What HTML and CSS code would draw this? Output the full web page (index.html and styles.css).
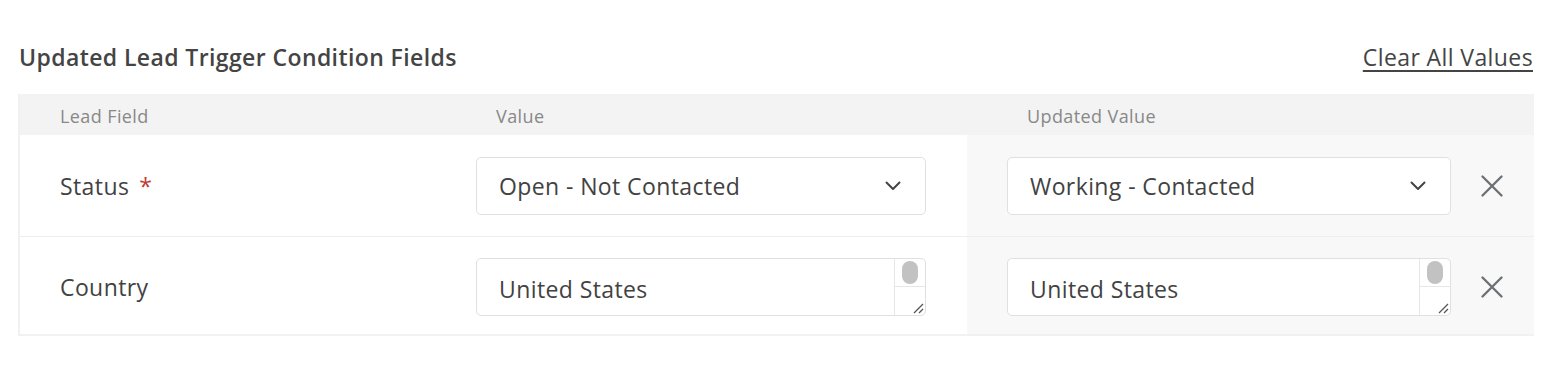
FILE: index.html
```html
<!DOCTYPE html>
<html>
<head>
  <title>Updated Lead Trigger Condition Fields</title>
  <link rel="stylesheet" href="styles.css">
</head>
<body>

  <div class="panel">
    <div class="panel-head">
      <h2 class="title">Updated Lead Trigger Condition Fields</h2>
      <a class="clear" href="#">Clear All Values</a>
    </div>

    <div class="table">
      <div class="row head">
        <div class="cell label">Lead Field</div>
        <div class="cell value">Value</div>
        <div class="cell updated">Updated Value</div>
      </div>

      <div class="row">
        <div class="cell label">Status <span class="req">*</span></div>
        <div class="cell value">
          <div class="select">
            <span>Open - Not Contacted</span>
            <svg class="chevron" width="16" height="10" viewBox="0 0 16 10"><path d="M1.5 1.5 L8 8 L14.5 1.5" fill="none" stroke="#444" stroke-width="2" stroke-linecap="round" stroke-linejoin="round"/></svg>
          </div>
        </div>
        <div class="cell updated">
          <div class="select">
            <span>Working - Contacted</span>
            <svg class="chevron" width="16" height="10" viewBox="0 0 16 10"><path d="M1.5 1.5 L8 8 L14.5 1.5" fill="none" stroke="#444" stroke-width="2" stroke-linecap="round" stroke-linejoin="round"/></svg>
          </div>
          <div class="remove">
            <svg width="22" height="22" viewBox="0 0 22 22"><path d="M1.5 1.5 L20.5 20.5 M20.5 1.5 L1.5 20.5" stroke="#6b7074" stroke-width="2.3" stroke-linecap="round"/></svg>
          </div>
        </div>
      </div>

      <div class="row last">
        <div class="cell label">Country</div>
        <div class="cell value">
          <div class="textarea">
            <span class="text">United States</span>
            <div class="scroll">
              <div class="track"><div class="thumb"></div></div>
              <div class="grip">
                <svg width="12" height="12" viewBox="0 0 12 12"><path d="M2 11 L11 2 M7 11 L11 7" stroke="#555" stroke-width="1.3"/></svg>
              </div>
            </div>
          </div>
        </div>
        <div class="cell updated">
          <div class="textarea">
            <span class="text">United States</span>
            <div class="scroll">
              <div class="track"><div class="thumb"></div></div>
              <div class="grip">
                <svg width="12" height="12" viewBox="0 0 12 12"><path d="M2 11 L11 2 M7 11 L11 7" stroke="#555" stroke-width="1.3"/></svg>
              </div>
            </div>
          </div>
          <div class="remove">
            <svg width="22" height="22" viewBox="0 0 22 22"><path d="M1.5 1.5 L20.5 20.5 M20.5 1.5 L1.5 20.5" stroke="#6b7074" stroke-width="2.3" stroke-linecap="round"/></svg>
          </div>
        </div>
      </div>
    </div>
  </div>

</body>
</html>
```

FILE: styles.css
```css
body {
  margin: 0;
  background: #fff;
  font-family: "Open Sans", "Noto Sans", sans-serif;
  color: #424242;
  letter-spacing: 0.4px;
}

.panel {
  width: 1516px;
  padding: 38px 0 0 18px;
}

.panel-head {
  display: flex;
  justify-content: space-between;
  align-items: center;
  height: 38px;
  margin-bottom: 18px;
}

.title {
  margin: 0 0 0 1px;
  font-size: 23px;
  font-weight: 600;
  color: #444;
}

.clear {
  font-size: 23px;
  color: #444;
  text-decoration: underline;
  text-underline-offset: 4px;
  margin-right: 1px;
}

.table {
  border: 2px solid #f1f1f1;
  border-top: 0;
  border-right: 0;
}

.row {
  display: grid;
  grid-template-columns: 456px 491px 1fr;
  border-bottom: 1px solid #eeeeee;
}

.row.head {
  background: #f3f3f3;
  height: 41px;
  border-bottom: 0;
}

.row.last {
  border-bottom: 0;
}

.cell {
  display: flex;
  align-items: center;
  font-size: 23px;
  padding: 22px 0 21px;
}

.head .cell {
  font-size: 18px;
  color: #888;
  padding: 2px 0 0;
}

.cell.label {
  padding-left: 40px;
}

.head .cell.value {
  padding-left: 20px;
}

.head .cell.updated {
  padding-left: 60px;
  background: none;
}

.cell.updated {
  background: #f8f8f8;
  padding-left: 40px;
}

.last .cell {
  padding-top: 21px;
  padding-bottom: 18px;
}

.req {
  color: #c23934;
  margin-left: 10px;
}

.select {
  width: 450px;
  height: 58px;
  box-sizing: border-box;
  border: 1px solid #e0e0e0;
  border-radius: 5px;
  background: #fff;
  display: flex;
  align-items: center;
  justify-content: space-between;
  padding: 0 24px 0 22px;
}

.updated .select,
.updated .textarea {
  width: 444px;
}

.chevron {
  display: block;
}

.remove {
  width: 81px;
  display: flex;
  justify-content: center;
  align-items: center;
}

.textarea {
  width: 450px;
  height: 58px;
  box-sizing: border-box;
  border: 1px solid #e0e0e0;
  border-radius: 5px;
  background: #fff;
  display: flex;
  overflow: hidden;
}

.textarea .text {
  flex: 1;
  padding: 14px 0 0 22px;
}

.scroll {
  width: 30px;
  border-left: 1px solid #e6e6e6;
  display: flex;
  flex-direction: column;
}

.track {
  height: 28px;
  border-bottom: 1px solid #e6e6e6;
  display: flex;
  justify-content: center;
  padding-top: 2px;
  box-sizing: border-box;
}

.thumb {
  width: 16px;
  height: 23px;
  border-radius: 8px;
  background: #c2c2c2;
}

.grip {
  flex: 1;
  display: flex;
  justify-content: flex-end;
  align-items: flex-end;
  padding: 0 1px 1px 0;
}

.grip svg {
  display: block;
}
```
